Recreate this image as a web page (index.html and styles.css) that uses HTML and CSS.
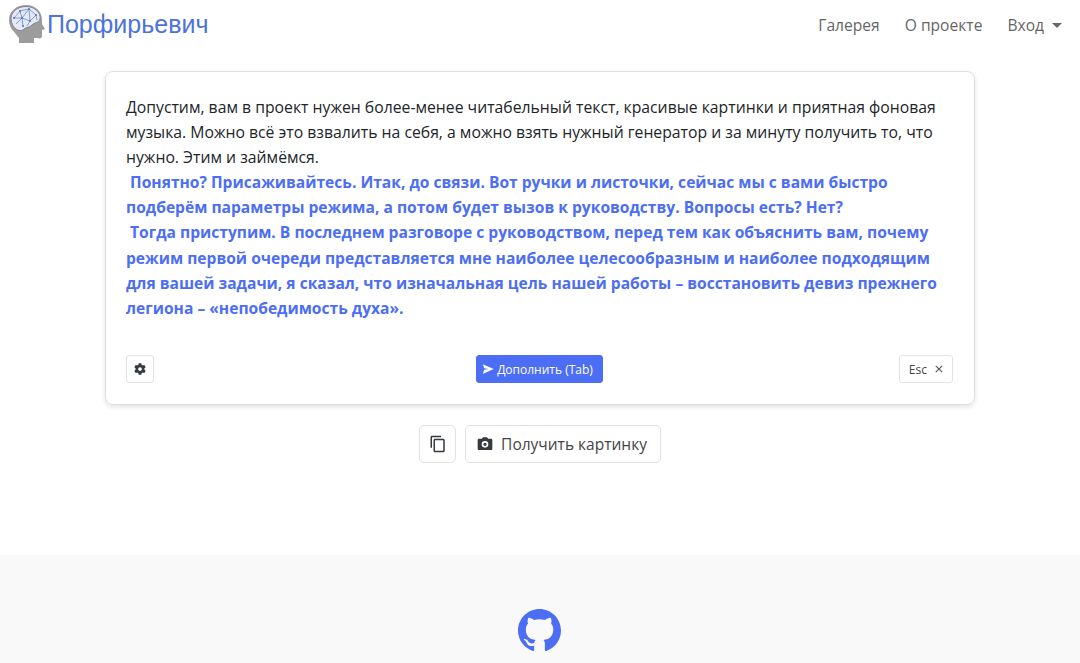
FILE: index.html
```html
<!DOCTYPE html>
<html lang="ru">
<head>
    <meta charset="UTF-8">
    <meta name="viewport" content="width=device-width, initial-scale=1.0">
    <title>Порфирьевич</title>
    <link rel="stylesheet" href="styles.css">
</head>
<body>
    <nav class="navbar">
        <a class="brand" href="#">
            <svg class="brand-logo" viewBox="0 0 36 38" width="36" height="38">
                <path d="M6 28 C2 24 0 20 0 15 C0 6 8 0 17 0 C27 0 33 7 33 15 L33 19 L36 24 L33 25 L33 31 C33 33 31 34 28 33 L25 33 L25 38 L10 38 L10 33 Z" fill="#9c9c9c"/>
                <path d="M2.500 17 C0 8 8 1.500 17 1.500 C26 1.500 32 8 31 14 C30 18 26 17 23 20 C20 23 16 22 14 25 C10 27 4.500 24 2.500 17 Z" fill="#e4e9f5" stroke="#84868e" stroke-width="1"/>
                <path d="M5 13 L11 6 L20 4 L27 10 L21 16 L13 13 L5 13 M11 6 L13 13 L14 21 M20 4 L21 16 L18 21 M13 13 L7 19 M20 4 L13 13 M27 10 L28 15" fill="none" stroke="#6a88c8" stroke-width="0.8"/>
                <g fill="#4f74c4">
                    <circle cx="11" cy="6" r="1"/>
                    <circle cx="20" cy="4" r="1"/>
                    <circle cx="27" cy="10" r="1"/>
                    <circle cx="13" cy="13" r="1"/>
                    <circle cx="21" cy="16" r="1"/>
                    <circle cx="5" cy="13" r="1"/>
                    <circle cx="14" cy="21" r="1"/>
                </g>
            </svg>
            Порфирьевич
        </a>
        <ul class="nav-links">
            <li><a href="#">Галерея</a></li>
            <li><a href="#">О проекте</a></li>
            <li><a href="#" class="dropdown">Вход</a></li>
        </ul>
    </nav>

    <main class="content">
        <div class="editor-card">
            <div class="editor-text">Допустим, вам в проект нужен более-менее читабельный текст, красивые картинки и приятная фоновая музыка. Можно всё это взвалить на себя, а можно взять нужный генератор и за минуту получить то, что нужно. Этим и займёмся.<strong class="generated">
 Понятно? Присаживайтесь. Итак, до связи. Вот ручки и листочки, сейчас мы с вами быстро подберём параметры режима, а потом будет вызов к руководству. Вопросы есть? Нет?
 Тогда приступим. В последнем разговоре с руководством, перед тем как объяснить вам, почему режим первой очереди представляется мне наиболее целесообразным и наиболее подходящим для вашей задачи, я сказал, что изначальная цель нашей работы – восстановить девиз прежнего легиона – «непобедимость духа».</strong></div>
            <div class="editor-controls">
                <button class="btn btn-small btn-square" type="button" aria-label="Настройки">
                    <svg viewBox="0 0 512 512" width="12" height="12"><path fill="#343a40" d="M487.4 315.7l-42.6-24.6c4.3-23.2 4.3-47 0-70.2l42.6-24.6c4.9-2.8 7.1-8.6 5.5-14-11.1-35.6-30-67.8-54.7-94.6-3.8-4.1-10-5.1-14.8-2.3L380.8 110c-17.9-15.4-38.5-27.3-60.8-35.1V25.8c0-5.6-3.9-10.5-9.4-11.7-36.7-8.2-74.3-7.8-109.2 0-5.5 1.2-9.4 6.1-9.4 11.7V75c-22.2 7.9-42.8 19.8-60.8 35.1L88.7 85.5c-4.9-2.8-11-1.9-14.8 2.3-24.7 26.7-43.6 58.9-54.7 94.6-1.7 5.4.6 11.2 5.5 14L67.3 221c-4.3 23.2-4.3 47 0 70.2l-42.6 24.6c-4.9 2.8-7.1 8.6-5.5 14 11.1 35.6 30 67.8 54.7 94.6 3.8 4.1 10 5.1 14.8 2.3l42.6-24.6c17.9 15.4 38.5 27.3 60.8 35.1v49.2c0 5.6 3.9 10.5 9.4 11.7 36.7 8.2 74.3 7.8 109.2 0 5.5-1.2 9.4-6.1 9.4-11.7v-49.2c22.2-7.9 42.8-19.8 60.8-35.1l42.6 24.6c4.9 2.8 11 1.9 14.8-2.3 24.7-26.7 43.6-58.9 54.7-94.6 1.5-5.5-.7-11.3-5.6-14.1zM256 336c-44.1 0-80-35.9-80-80s35.9-80 80-80 80 35.9 80 80-35.9 80-80 80z"/></svg>
                </button>
                <button class="btn btn-small btn-primary" type="button">
                    <svg viewBox="0 0 16 16" width="12" height="12"><path fill="#fff" d="M1 1.5 L15.5 8 L1 14.5 L3 9 L9 8 L3 7 Z"/></svg>
                    Дополнить (Tab)
                </button>
                <button class="btn btn-small btn-esc" type="button">
                    Esc
                    <svg viewBox="0 0 10 10" width="8" height="8"><path d="M1 1 L9 9 M9 1 L1 9" stroke="#555" stroke-width="1.4" fill="none"/></svg>
                </button>
            </div>
        </div>

        <div class="actions">
            <button class="btn btn-large btn-square-large" type="button" aria-label="Копировать">
                <svg viewBox="0 0 24 24" width="18" height="18"><path fill="#343a40" d="M16 1H4c-1.1 0-2 .9-2 2v14h2V3h12V1zm3 4H8c-1.1 0-2 .9-2 2v14c0 1.1.9 2 2 2h11c1.1 0 2-.9 2-2V7c0-1.100-.9-2-2-2zm0 16H8V7h11v14z"/></svg>
            </button>
            <button class="btn btn-large" type="button">
                <svg viewBox="0 0 24 24" width="16" height="16"><path fill="#343a40" fill-rule="evenodd" d="M9 2 7.2 4H3C1.900 4 1 4.900 1 6v13c0 1.100.9 2 2 2h18c1.100 0 2-.9 2-2V6c0-1.100-.9-2-2-2h-4.200L15 2H9zm3 15.500a5 5 0 1 1 0-10 5 5 0 0 1 0 10zm0-2.500a2.500 2.500 0 1 0 0-5 2.500 2.500 0 0 0 0 5z"/></svg>
                Получить картинку
            </button>
        </div>
    </main>

    <footer class="footer">
        <a href="#" aria-label="GitHub">
            <svg viewBox="0 0 16 16" width="43" height="43"><path fill="#4c6ef5" d="M8 0C3.58 0 0 3.58 0 8c0 3.54 2.29 6.53 5.47 7.59.4.07.55-.17.55-.38 0-.19-.01-.82-.01-1.49-2.01.37-2.53-.49-2.69-.94-.09-.23-.48-.94-.82-1.13-.28-.15-.68-.52-.01-.53.63-.01 1.08.58 1.23.82.72 1.21 1.87.87 2.33.66.07-.52.28-.87.51-1.07-1.78-.2-3.64-.89-3.64-3.95 0-.87.31-1.59.82-2.15-.08-.2-.36-1.02.08-2.12 0 0 .67-.21 2.2.82.64-.18 1.32-.27 2-.27.68 0 1.36.09 2 .27 1.53-1.04 2.2-.82 2.2-.82.44 1.1.16 1.92.08 2.12.51.56.82 1.27.82 2.15 0 3.07-1.87 3.75-3.65 3.95.29.25.54.73.54 1.48 0 1.07-.01 1.93-.01 2.2 0 .21.15.46.55.38A8.013 8.013 0 0016 8c0-4.42-3.58-8-8-8z"/></svg>
        </a>
    </footer>
</body>
</html>
```

FILE: styles.css
```css
* {
    margin: 0;
    padding: 0;
    box-sizing: border-box;
}

body {
    font-family: 'Open Sans', 'Noto Sans', sans-serif;
    background: #fff;
    color: #212529;
    font-size: 15.75px;
}

a {
    text-decoration: none;
}

.navbar {
    height: 51px;
    padding: 5px 18px 0 9px;
    display: flex;
    justify-content: space-between;
    align-items: flex-start;
}

.brand {
    display: flex;
    align-items: center;
    gap: 2px;
    height: 38px;
    font-family: 'Liberation Sans', Arial, sans-serif;
    font-size: 25px;
    color: #4c73dc;
}

.nav-links {
    display: flex;
    gap: 25px;
    list-style: none;
    padding-top: 9px;
}

.nav-links a {
    color: #666;
    font-size: 15.6px;
}

.dropdown::after {
    content: "";
    display: inline-block;
    margin-left: 8px;
    vertical-align: 3px;
    border-top: 5px solid #666;
    border-left: 5px solid transparent;
    border-right: 5px solid transparent;
}

.content {
    height: 504px;
    padding-top: 20px;
}

.editor-card {
    width: 870px;
    height: 334px;
    margin: 0 auto;
    padding: 23px 21px 21px 20px;
    display: flex;
    flex-direction: column;
    justify-content: space-between;
    border: 1px solid #dfdfdf;
    border-radius: 8px;
    box-shadow: 0 2px 5px rgba(0, 0, 0, 0.12);
}

.editor-text {
    white-space: pre-wrap;
    line-height: 25.1px;
}

.generated {
    color: #4c6ef5;
    font-weight: 700;
    font-size: 15.6px;
}

.editor-controls {
    display: grid;
    grid-template-columns: 1fr auto 1fr;
    align-items: center;
}

.btn {
    display: inline-flex;
    align-items: center;
    justify-content: center;
    font-family: inherit;
    background: #fff;
    color: #444;
    border: 1px solid #e3e3e3;
    cursor: pointer;
}

.btn-small {
    height: 28px;
    padding: 0 10px;
    gap: 3px;
    font-size: 12px;
    border-radius: 3px;
}

.btn-square {
    width: 28px;
    padding: 0;
    justify-self: start;
}

.btn-primary {
    background: #4c6ef5;
    border-color: #4c6ef5;
    color: #fff;
    padding: 0 9px 0 5px;
}

.btn-esc {
    gap: 8px;
    padding: 0 9px;
    justify-self: end;
}

.actions {
    margin-top: 20px;
    display: flex;
    justify-content: center;
    gap: 9px;
}

.btn-large {
    height: 38px;
    padding: 0 13px 0 11px;
    gap: 8px;
    font-size: 15.5px;
    border-radius: 5px;
}

.btn-square-large {
    width: 37px;
    padding: 0;
}

.footer {
    height: 108px;
    padding: 54px 2px 0 0;
    background: #f9f9f9;
    text-align: center;
}

.footer svg {
    display: inline-block;
}
```
